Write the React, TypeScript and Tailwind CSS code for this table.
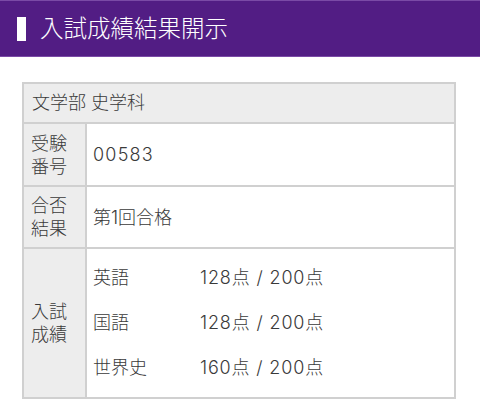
const scores = [
  { subject: "英語", score: "128点 / 200点" },
  { subject: "国語", score: "128点 / 200点" },
  { subject: "世界史", score: "160点 / 200点" },
];

export default function App() {
  return (
    <div
      className="min-h-[416px] w-[480px] bg-white font-light text-[#3a3a3a]"
      style={{ fontFamily: 'Inter, "Noto Sans CJK JP", sans-serif' }}>
      <header className="flex h-[57px] items-center border-y border-[#7a4aa6] bg-[#521d84] pl-[17px]">
        <span className="h-[24px] w-[9px] bg-white" />
        <h1 className="ml-[14px] text-[23.5px] font-light leading-none text-white">入試成績結果開示</h1>
      </header>

      <div className="px-[22px] pt-[25px]">
        <table className="w-[434px] border-collapse border-2 border-[#d0d0d0] text-[18px]">
          <tbody>
            <tr className="h-[40px]">
              <td colSpan={2} className="border-2 border-[#d0d0d0] bg-[#ededed] px-[8px] leading-none">
                文学部 史学科
              </td>
            </tr>
            <tr className="h-[63px]">
              <th className="w-[63px] border-2 border-[#d0d0d0] bg-[#ededed] px-[7px] text-left font-light leading-[23px]">
                受験
                <br />
                番号
              </th>
              <td className="border-2 border-[#d0d0d0] px-[6px] tracking-[1.2px]">00583</td>
            </tr>
            <tr className="h-[62px]">
              <th className="border-2 border-[#d0d0d0] bg-[#ededed] px-[7px] text-left font-light leading-[23px]">
                合否
                <br />
                結果
              </th>
              <td className="border-2 border-[#d0d0d0] px-[6px]">第1回合格</td>
            </tr>
            <tr className="h-[150px]">
              <th className="border-2 border-[#d0d0d0] bg-[#ededed] px-[7px] text-left font-light leading-[23px]">
                入試
                <br />
                成績
              </th>
              <td className="border-2 border-[#d0d0d0] px-[6px]">
                <div className="flex flex-col gap-[21px]">
                  {scores.map((row) => (
                    <div key={row.subject} className="flex leading-[24px]">
                      <span className="w-[107px]">{row.subject}</span>
                      <span className="tracking-[0.85px]">{row.score}</span>
                    </div>
                  ))}
                </div>
              </td>
            </tr>
          </tbody>
        </table>
      </div>
    </div>
  );
}
